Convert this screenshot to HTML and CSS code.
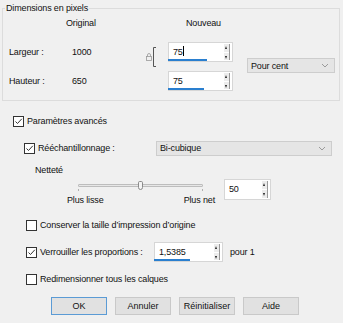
FILE: index.html
```html
<!DOCTYPE html>
<html lang="fr">
<head>
<meta charset="UTF-8">
<link rel="stylesheet" href="styles.css">
<title>Redimensionner</title>
</head>
<body>
<div class="dlg">
  <fieldset class="grp">
    <legend>Dimensions en pixels</legend>
    <div class="dim-grid">
      <span class="hd-orig">Original</span>
      <span class="hd-new">Nouveau</span>

      <span class="lbl r1">Largeur :</span>
      <span class="orig r1">1000</span>
      <svg class="chain" width="12" height="20" viewBox="0 0 12 20">
        <path d="M2.5 9.5 v-1.5 a1.5 1.5 0 0 1 3 0 v1.5" fill="none" stroke="#9a9a9a" stroke-width="0.8"/>
        <rect x="1.5" y="9.5" width="5" height="4" fill="none" stroke="#9a9a9a" stroke-width="0.8"/>
        <path d="M11 0.5 H8.5 V19.5 H11" fill="none" stroke="#555" stroke-width="1"/>
      </svg>
      <div class="spin r1"><span class="val u1">75<i class="caret"></i></span><span class="arr"><b class="up"></b><b class="dn"></b></span></div>
      <div class="combo unit"><span>Pour cent</span><svg width="8" height="5" viewBox="0 0 8 5"><path d="M1 1 L4 4 L7 1" fill="none" stroke="#9a9a9a" stroke-width="1"/></svg></div>

      <span class="lbl r2">Hauteur :</span>
      <span class="orig r2">650</span>
      <div class="spin r2"><span class="val u2">75</span><span class="arr"><b class="up"></b><b class="dn"></b></span></div>
    </div>
  </fieldset>

  <div class="row adv">
    <span class="cb on"><svg width="9" height="9" viewBox="0 0 9 9"><path d="M1.5 4.5 L3.5 6.5 L7.8 1.8" fill="none" stroke="#333" stroke-width="1"/></svg></span>
    <span>Paramètres avancés</span>
  </div>

  <div class="row resample">
    <span class="cb on"><svg width="9" height="9" viewBox="0 0 9 9"><path d="M1.5 4.5 L3.5 6.5 L7.8 1.8" fill="none" stroke="#333" stroke-width="1"/></svg></span>
    <span>Rééchantillonnage :</span>
    <div class="combo method"><span>Bi-cubique</span><svg width="8" height="5" viewBox="0 0 8 5"><path d="M1 1 L4 4 L7 1" fill="none" stroke="#9a9a9a" stroke-width="1"/></svg></div>
  </div>

  <div class="row sharp-lbl">Netteté</div>

  <div class="sharp">
    <div class="slider-col">
      <div class="slider">
        <div class="track"></div>
        <div class="thumb"></div>
        <i class="tick t-l"></i><i class="tick t-r"></i>
      </div>
      <div class="ends"><span>Plus lisse</span><span>Plus net</span></div>
    </div>
    <div class="spin s50"><span class="val">50</span><span class="arr"><b class="up"></b><b class="dn"></b></span></div>
  </div>

  <div class="row opt keep">
    <span class="cb"></span>
    <span>Conserver la taille d’impression d’origine</span>
  </div>

  <div class="row opt lock">
    <span class="cb on"><svg width="9" height="9" viewBox="0 0 9 9"><path d="M1.5 4.5 L3.5 6.5 L7.8 1.8" fill="none" stroke="#333" stroke-width="1"/></svg></span>
    <span class="lock-lbl">Verrouiller les proportions :</span>
    <div class="spin ratio"><span class="val u3">1,5385</span><span class="arr"><b class="up"></b><b class="dn"></b></span></div>
    <span class="per">pour 1</span>
  </div>

  <div class="row opt layers">
    <span class="cb"></span>
    <span>Redimensionner tous les calques</span>
  </div>

  <div class="btns">
    <button class="btn ok">OK</button>
    <button class="btn">Annuler</button>
    <button class="btn">Réinitialiser</button>
    <button class="btn">Aide</button>
  </div>
</div>
</body>
</html>
```

FILE: styles.css
```css
*
{
    box-sizing: border-box;
}
html, body
{
    margin: 0;
    background: #f0f0f0;
}
body
{
    font-family: "Liberation Sans", Arial, sans-serif;
    font-size: 9px;
    letter-spacing: -0.15px;
    color: #111;
    width: 343px;
    height: 323px;
    overflow: hidden;
}
.dlg{display: flex;flex-direction: column;}

/* group box */
.grp{margin: 3px 3px 0 2px;padding: 0 0 9px 6px;border: 1px solid #dcdcdc;min-width: 0;}
.grp legend{margin-left: -4px;padding: 0 1px;line-height: 10px;}
.dim-grid
{
    display: grid;
    grid-template-columns: 57px 79px 23px 65px 14px 88px;
    grid-template-rows: 20px 20px 20px;
    row-gap: 9px;
    align-items: center;
}
.hd-orig{grid-column: 1 / 3;grid-row: 1;padding-left: 57px;}
.hd-new{grid-column: 4;grid-row: 1;padding-left: 18px;}
.r1{grid-row: 2;}
.r2{grid-row: 3;}
.lbl{grid-column: 1;}
.orig{grid-column: 2;padding-left: 6px;}
.chain{grid-column: 3;grid-row: 2 / 4;align-self: start;margin: 5px 0 0 0;}
.dim-grid .spin{grid-column: 4;}
.unit{grid-column: 6;grid-row: 2 / 4;align-self: start;margin-top: 16px;}

/* spin boxes */
.spin{display: flex;height: 20px;width: 65px;background: #fff;border: 1px solid #d6d6d6;}
.spin .val{flex: 1;position: relative;padding-left: 4px;line-height: 18px;}
.spin .val::after{content: "";position: absolute;left: -1px;bottom: 0;height: 2px;background: #2a7fcf;}
.u1::after{width: 39px;}
.u2::after{width: 36px;}
.u3::after{width: 36px;}
.s50 .val::after{display: none;}
.caret{display: inline-block;width: 1px;height: 10px;background: #000;vertical-align: -1px;}
.arr{width: 6px;display: flex;flex-direction: column;gap: 1px;margin: 1px 2px 1px 0;border-right: 1px solid #9a9a9a;}
.arr b{flex: 1;position: relative;background: #ececec;}
.arr b::after{content: "";position: absolute;left: 1px;border-left: 1.5px solid transparent;border-right: 1.5px solid transparent;}
.arr .up::after{top: 2px;border-bottom: 3px solid #222;}
.arr .dn::after{top: 3px;border-top: 3px solid #222;}

/* combo boxes */
.combo{display: flex;align-items: center;justify-content: space-between;height: 15px;background: #e5e5e5;border: 1px solid #cdcdcd;padding: 0 5px 0 3px;}
.unit{width: 88px;}
.method{width: 176px;margin: 0 11px 0 auto;}

/* rows */
.row{display: flex;align-items: center;height: 14px;}
.cb{width: 11px;height: 11px;border: 1px solid #333;background: #fff;margin-right: 3px;display: flex;align-items: center;justify-content: center;}
.adv{margin-top: 13px;padding-left: 13px;}
.resample{margin-top: 13px;padding-left: 24px;}
.sharp-lbl{margin-top: 9px;height: 12px;padding-left: 35px;}

.sharp{display: flex;margin-top: 3px;height: 26px;}
.slider-col{width: 148px;margin-left: 67px;}
.slider{position: relative;height: 12px;}
.track{position: absolute;left: 11px;right: 12px;top: 5px;height: 3px;background: #e7e7e7;border: 1px solid #bdbdbd;border-radius: 1px;}
.thumb{position: absolute;left: 71px;top: 2px;width: 5px;height: 9px;background: #f4f4f4;border: 1px solid #8a8a8a;border-radius: 2px 2px 3px 3px;}
.tick{position: absolute;top: 10px;width: 1px;height: 2px;background: #b0b0b0;}
.t-l{left: 11px;}
.t-r{right: 12px;}
.ends{display: flex;justify-content: space-between;margin-top: 4px;line-height: 10px;}
.s50{width: 47px;height: 21px;margin-left: 9px;}

.opt{padding-left: 26px;}
.keep{margin-top: 14px;height: 12px;}
.lock{margin-top: 11px;height: 20px;}
.lock-lbl{width: 114px;}
.ratio{width: 69px;}
.per{margin-left: 7px;}
.layers{margin-top: 11px;height: 12px;}

.btns{display: flex;gap: 8px;margin-top: 12px;padding-left: 51px;}
.btn{width: 56px;height: 18px;padding: 0;font: inherit;color: #111;background: #e1e1e1;border: 1px solid #c9c9c9;}
.ok{border-color: #5b9bd5;}
```
